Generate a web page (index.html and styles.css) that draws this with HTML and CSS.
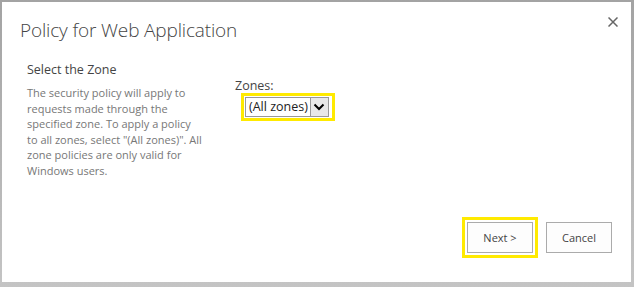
FILE: index.html
```html
<!DOCTYPE html>
<html>
<head>
<meta charset="utf-8">
<link rel="stylesheet" href="styles.css">
</head>
<body>
<div class="frame">
  <div class="dialog">
    <div class="header">
      <h1 class="title">Policy for Web Application</h1>
      <span class="close" aria-label="Close">
        <svg width="10" height="10" viewBox="0 0 10 10"><path d="M0.5 0.5L9.5 9.5M9.5 0.5L0.5 9.5" stroke="#666" stroke-width="1.5" fill="none"/></svg>
      </span>
    </div>
    <div class="section">
      <div class="desc-col">
        <div class="sec-title">Select the Zone</div>
        <div class="sec-desc">The security policy will apply to<br>requests made through the<br>specified zone. To apply a policy<br>to all zones, select "(All zones)". All<br>zone policies are only valid for<br>Windows users.</div>
      </div>
      <div class="field-col">
        <div class="field-label">Zones:</div>
        <div class="hl hl-select">
          <div class="select">
            <span class="select-text">(All zones)</span>
            <span class="select-arrow">
              <svg width="12" height="8" viewBox="0 0 12 8"><path d="M1.5 1.5L6 6L10.5 1.5" stroke="#000" stroke-width="2" fill="none"/></svg>
            </span>
          </div>
        </div>
      </div>
    </div>
    <div class="footer">
      <div class="hl hl-btn"><button class="btn">Next &gt;</button></div>
      <button class="btn">Cancel</button>
    </div>
  </div>
</div>
</body>
</html>
```
FILE: styles.css
```css
html, body {
  margin: 0;
  padding: 0;
}
body {
  width: 634px;
  height: 287px;
  overflow: hidden;
  font-family: "Open Sans", "Noto Sans", sans-serif;
}
.frame {
  width: 634px;
  height: 287px;
  box-sizing: border-box;
  padding: 2px 3px 5px 2px;
  background: linear-gradient(#a3a3a3, #c4c4c4);
  display: flex;
}
.dialog {
  flex: 1;
  background: #fff;
  display: flex;
  flex-direction: column;
}
.header {
  display: flex;
  justify-content: space-between;
  align-items: flex-start;
  padding: 14px 13px 0 18px;
}
.title {
  margin: 0;
  font-weight: 300;
  font-size: 19px;
  color: #444;
  line-height: 28px;
  letter-spacing: -0.15px;
}
.close {
  display: block;
  padding-top: 1px;
}
.close svg {
  display: block;
}
.section {
  display: flex;
  padding: 17px 0 0 25px;
}
.desc-col {
  width: 181px;
}
.sec-title {
  font-size: 12.5px;
  color: #444;
  line-height: 18px;
}
.sec-desc {
  margin-top: 6px;
  font-size: 11px;
  color: #777;
  line-height: 15.6px;
  white-space: nowrap;
}
.field-col {
  margin-left: 27px;
  padding-top: 17px;
}
.field-label {
  font-size: 12.5px;
  color: #444;
  line-height: 16px;
}
.hl {
  border: 3px solid #ffea00;
  padding: 2px;
  display: inline-block;
}
.hl-select {
  margin-left: 6px;
  padding: 1px 3px 1px 1px;
  margin-top: -1px;
}
.select {
  display: flex;
  align-items: stretch;
  border: 1px solid #999;
  height: 20px;
  box-sizing: border-box;
  margin: 0;
}
.select-text {
  font-size: 12.5px;
  color: #222;
  padding: 0 2px 0 3px;
  line-height: 18px;
}
.select-arrow {
  width: 17px;
  border-left: 1px solid #999;
  background: #e8e8e8;
  display: flex;
  align-items: center;
  justify-content: center;
}
.footer {
  margin-top: auto;
  display: flex;
  justify-content: flex-end;
  align-items: center;
  gap: 8px;
  padding: 0 19px 24px 0;
}
.btn {
  width: 66px;
  height: 31px;
  border: 1px solid #ababab;
  background: #fdfdfd;
  font-family: "Open Sans", "Noto Sans", sans-serif;
  font-size: 11px;
  color: #444;
  padding: 0;
  margin: 0;
}
.hl-btn .btn {
  display: block;
}
```
